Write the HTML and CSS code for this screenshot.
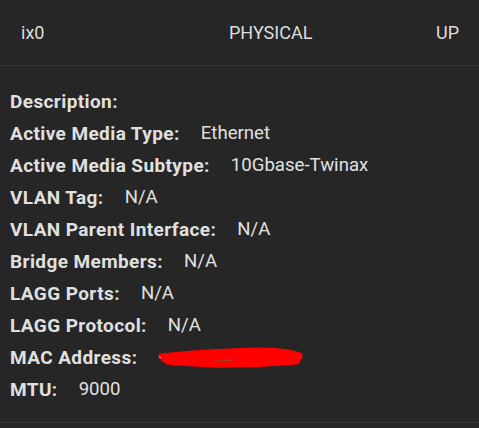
FILE: index.html
```html
<html>
    <head>
        <title>Interface ix0</title>
        <link rel="stylesheet" href="styles.css">
    </head>
    <body>
        <div class="card">
            <div class="card-header">
                <span class="col">ix0</span>
                <span class="col">PHYSICAL</span>
                <span class="col">UP</span>
            </div>
            <div class="card-body">
                <div class="row"><span class="label">Description:</span></div>
                <div class="row"><span class="label">Active Media Type:</span><span class="value">Ethernet</span></div>
                <div class="row"><span class="label">Active Media Subtype:</span><span class="value">10Gbase-Twinax</span></div>
                <div class="row"><span class="label">VLAN Tag:</span><span class="value">N/A</span></div>
                <div class="row"><span class="label">VLAN Parent Interface:</span><span class="value">N/A</span></div>
                <div class="row"><span class="label">Bridge Members:</span><span class="value">N/A</span></div>
                <div class="row"><span class="label">LAGG Ports:</span><span class="value">N/A</span></div>
                <div class="row"><span class="label">LAGG Protocol:</span><span class="value">N/A</span></div>
                <div class="row">
                    <span class="label">MAC Address:</span>
                    <!-- mac redacted -->
                    <svg class="redact" width="148" height="24" viewBox="0 0 148 24">
                        <path d="M2 9 L30 7 L55 6 L75 3 L90 4 L105 2 L112 5 L140 6 L146 11 L142 17 L120 19 L100 21 L85 20 L60 22 L40 19 L20 18 L5 16 Z" fill="#ff0000"/>
                        <path d="M4 10 C30 7 60 5 100 4 C120 4 135 6 143 9 M10 16 C40 19 80 21 140 16 M30 12 C60 9 90 13 130 11" stroke="#ff0000" stroke-width="5" stroke-linecap="round" fill="none"/>
                        <path d="M58 15 C64 14 70 15 76 14" stroke="#a83a3a" stroke-width="1.2" fill="none"/>
                        <path d="M2 11 L4 12" stroke="#cccccc" stroke-width="1" fill="none"/>
                    </svg>
                </div>
                <div class="row"><span class="label">MTU:</span><span class="value">9000</span></div>
            </div>
        </div>
    </body>
</html>
```

FILE: styles.css
```css
body{
    margin: 0;
    background-color: #262626;
    font-family: Roboto, "Liberation Sans", sans-serif;
    overflow: hidden;
}
.card{
    width: 479px;
    height: 428px;
    background-color: #262626;
}
.card-header{
    display: grid;
    grid-template-columns: 208px 207px 1fr;
    height: 65px;
    align-items: center;
    padding-left: 21px;
    border-bottom: 1px solid #333333;
    color: #dddddd;
    font-size: 18px;
}
.card-body{
    padding: 19px 10px 0 10px;
    height: 337px;
    border-bottom: 1px solid #333333;
}
.row{
    display: flex;
    align-items: center;
    height: 32px;
    font-size: 19px;
    color: #e0e0e0;
}
.label{
    font-weight: 700;
    letter-spacing: 0.4px;
}
.value{
    margin-left: 21px;
    font-size: 18.6px;
}
.redact{
    margin-left: 20px;
    margin-top: 2px;
}
```
